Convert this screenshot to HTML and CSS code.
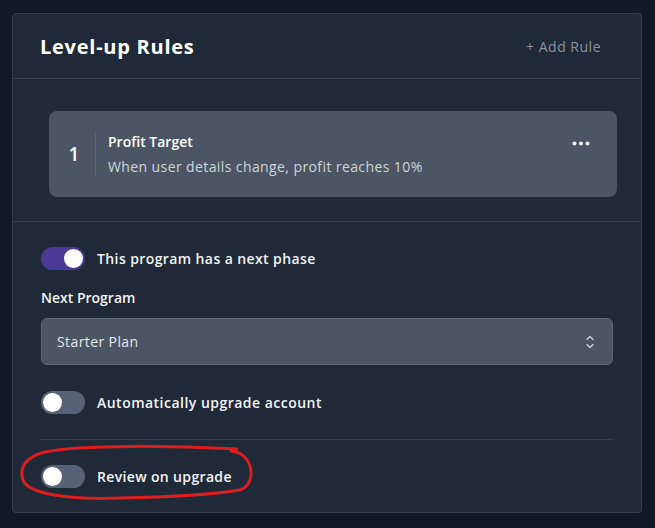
FILE: index.html
```html
<!DOCTYPE html>
<html lang="en">
<head>
<meta charset="utf-8">
<title>Level-up Rules</title>
<link rel="stylesheet" href="styles.css">
</head>
<body>
<div class="card">
  <div class="card-header">
    <h2 class="title">Level-up Rules</h2>
    <span class="add-rule">+ Add Rule</span>
  </div>
  <div class="rules">
    <div class="rule">
      <div class="rule-num">1</div>
      <div class="rule-body">
        <div class="rule-title">Profit Target</div>
        <div class="rule-desc">When user details change, profit reaches 10%</div>
      </div>
      <svg class="rule-menu" width="18" height="5" viewBox="0 0 18 5"><circle cx="2.5" cy="2.5" r="2" fill="#f3f4f6"/><circle cx="9" cy="2.5" r="2" fill="#f3f4f6"/><circle cx="15.5" cy="2.5" r="2" fill="#f3f4f6"/></svg>
    </div>
  </div>
  <div class="settings">
    <div class="toggle-row">
      <span class="toggle on"><span class="knob"></span></span>
      <span class="toggle-label">This program has a next phase</span>
    </div>
    <div class="field-label">Next Program</div>
    <div class="select">
      <span>Starter Plan</span>
      <svg class="chev" width="8" height="14" viewBox="0 0 8 14"><path d="M1 4.5 L4 1.5 L7 4.5 M1 9.5 L4 12.5 L7 9.5" fill="none" stroke="#cbd2dc" stroke-width="1.4" stroke-linecap="round" stroke-linejoin="round"/></svg>
    </div>
    <div class="toggle-row auto">
      <span class="toggle"><span class="knob"></span></span>
      <span class="toggle-label">Automatically upgrade account</span>
    </div>
    <div class="divider"></div>
    <div class="toggle-row review">
      <span class="toggle"><span class="knob"></span></span>
      <span class="toggle-label">Review on upgrade</span>
    </div>
  </div>
</div>
<svg class="annotation" width="655" height="528" viewBox="0 0 655 528">
  <path d="M237 449 C180 446, 80 444, 45 452 C25 457, 19 468, 23 480 C28 494, 70 500, 120 498 C170 497, 215 494, 240 490 C252 486, 254 470, 247 460 C244 455, 240 452, 231 451" fill="none" stroke="#dc1e1e" stroke-width="3" stroke-linecap="round"/>
</svg>
</body>
</html>
```

FILE: styles.css
```css
html, body {
  margin: 0;
  padding: 0;
}
body {
  background: #111827;
  font-family: "Open Sans", "Noto Sans", sans-serif;
  color: #f3f4f6;
  width: 655px;
  height: 528px;
  overflow: hidden;
  position: relative;
  padding-top: 13px;
  box-sizing: border-box;
}
.card {
  margin-left: 12px;
  width: 630px;
  box-sizing: border-box;
  background: #1f2937;
  border: 1px solid #374151;
  border-radius: 4px;
}
.card-header {
  height: 64px;
  display: flex;
  align-items: center;
  justify-content: space-between;
  padding: 0 40px 0 27px;
  border-bottom: 1px solid #374151;
}
.title {
  margin: 0;
  font-size: 20px;
  font-weight: 700;
  color: #ffffff;
  letter-spacing: 0.75px;
}
.add-rule {
  font-size: 14px;
  color: #8b93a1;
  letter-spacing: 0.5px;
}
.rules {
  padding: 32px 24px 24px 36px;
  border-bottom: 1px solid #374151;
}
.rule {
  height: 86px;
  background: #4b5563;
  border-radius: 8px;
  display: flex;
  align-items: center;
}
.rule-num {
  width: 46px;
  text-align: center;
  font-size: 19px;
  font-weight: 600;
  color: #f9fafb;
  box-sizing: border-box;
  padding-left: 4px;
}
.rule-body {
  border-left: 1px solid #5b6472;
  padding-left: 12px;
  height: 44px;
  display: flex;
  flex-direction: column;
  justify-content: center;
  flex: 1;
}
.rule-title {
  font-size: 14px;
  font-weight: 600;
  color: #ffffff;
  line-height: 20px;
}
.rule-desc {
  font-size: 14px;
  color: #d1d5db;
  line-height: 20px;
  margin-top: 5px;
  letter-spacing: 0.4px;
}
.rule-menu {
  align-self: flex-start;
  margin-top: 30px;
  margin-right: 27px;
}
.settings {
  padding: 25px 28px 24px 28px;
}
.toggle-row {
  display: flex;
  align-items: center;
  gap: 12px;
  height: 23px;
}
.toggle {
  width: 44px;
  height: 23px;
  border-radius: 12px;
  background: #586276;
  position: relative;
  flex-shrink: 0;
}
.toggle.on {
  background: #4b3a93;
}
.knob {
  position: absolute;
  top: 2px;
  left: 2px;
  width: 19px;
  height: 19px;
  border-radius: 50%;
  background: #ffffff;
}
.toggle.on .knob {
  left: 23px;
}
.toggle-label {
  font-size: 14px;
  font-weight: 600;
  color: #f3f4f6;
  letter-spacing: 0.4px;
}
.toggle-row.auto .toggle-label {
  letter-spacing: 0.48px;
}
.toggle-row.review .toggle-label {
  letter-spacing: 0.35px;
}
.field-label {
  margin-top: 18px;
  font-size: 14px;
  font-weight: 600;
  line-height: 20px;
  color: #f3f4f6;
}
.select {
  margin-top: 10px;
  height: 47px;
  box-sizing: border-box;
  background: #4b5563;
  border: 1px solid #5d6776;
  border-radius: 6px;
  display: flex;
  align-items: center;
  justify-content: space-between;
  padding: 0 18px 0 15px;
  font-size: 14px;
  font-weight: 500;
  color: #e5e7eb;
  letter-spacing: 0.4px;
}
.toggle-row.auto {
  margin-top: 26px;
}
.divider {
  margin-top: 25px;
  height: 1px;
  background: #374151;
}
.toggle-row.review {
  margin-top: 25px;
}
.annotation {
  position: absolute;
  left: 0;
  top: 0;
  pointer-events: none;
}
```
